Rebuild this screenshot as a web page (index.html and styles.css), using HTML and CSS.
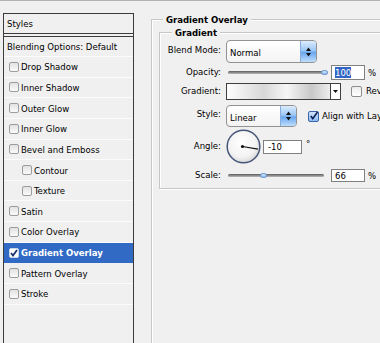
FILE: index.html
```html
<!DOCTYPE html>
<html lang="en">
<head>
  <meta charset="UTF-8">
  <title>Layer Style</title>
  <link rel="stylesheet" href="styles.css">
</head>
<body>

  <div class="dialog">

    <!-- lista de estilos -->
    <div class="styles-panel">
      <div class="panel-title">Styles</div>
      <div class="panel-blending">Blending Options: Default</div>
      <ul class="effects">
        <li><span class="box"></span>Drop Shadow</li>
        <li><span class="box"></span>Inner Shadow</li>
        <li><span class="box"></span>Outer Glow</li>
        <li><span class="box"></span>Inner Glow</li>
        <li><span class="box"></span>Bevel and Emboss</li>
        <li class="sub"><span class="box"></span>Contour</li>
        <li class="sub"><span class="box"></span>Texture</li>
        <li><span class="box"></span>Satin</li>
        <li><span class="box"></span>Color Overlay</li>
        <li class="selected">
          <span class="box checked">
            <svg width="8" height="8" viewBox="0 0 8 8"><path d="M1 4 L3 6.5 L7 1" fill="none" stroke="#1b2f6e" stroke-width="1.8"/></svg>
          </span>Gradient Overlay
        </li>
        <li><span class="box"></span>Pattern Overlay</li>
        <li><span class="box"></span>Stroke</li>
      </ul>
    </div>

    <!-- opciones -->
    <fieldset class="group outer">
      <legend>Gradient Overlay</legend>
      <fieldset class="group inner">
        <legend>Gradient</legend>

        <div class="row row-select">
          <label>Blend Mode:</label>
          <div class="select select-blend">
            <span class="select-value">Normal</span>
            <span class="select-arrows">
              <svg width="5" height="10" viewBox="0 0 5 10"><path d="M0 4 L2.5 0.5 L5 4 Z M0 6 L2.5 9.5 L5 6 Z" fill="#111"/></svg>
            </span>
          </div>
        </div>

        <div class="row row-slider">
          <label>Opacity:</label>
          <div class="slider"><div class="track"><span class="thumb" style="left: 100%"></span></div></div>
          <span class="field field-pct field-tall"><span class="sel">100</span></span>
          <span class="unit">%</span>
        </div>

        <div class="row row-gradient">
          <label>Gradient:</label>
          <div class="gradient-pick">
            <span class="gradient-swatch"></span>
            <span class="gradient-drop">
              <svg width="5" height="3" viewBox="0 0 5 3"><path d="M0 0 L5 0 L2.5 3 Z" fill="#111"/></svg>
            </span>
          </div>
          <span class="check check-reverse"></span>
          <span class="check-label">Reverse</span>
        </div>

        <div class="row row-select row-style">
          <label>Style:</label>
          <div class="select select-style">
            <span class="select-value">Linear</span>
            <span class="select-arrows">
              <svg width="5" height="10" viewBox="0 0 5 10"><path d="M0 4 L2.5 0.5 L5 4 Z M0 6 L2.5 9.5 L5 6 Z" fill="#111"/></svg>
            </span>
          </div>
          <span class="check check-align on">
            <svg width="10" height="10" viewBox="0 0 10 10"><path d="M2 5 L4.2 8 L9.5 0.5" fill="none" stroke="#0d1f55" stroke-width="1.8"/></svg>
          </span>
          <span class="check-label label-align">Align with Layer</span>
        </div>

        <div class="row row-angle">
          <label>Angle:</label>
          <svg class="dial" width="35" height="35" viewBox="0 0 35 35">
            <defs>
              <radialGradient id="dialFill" cx="45%" cy="40%" r="60%">
                <stop offset="0" stop-color="#ffffff"/>
                <stop offset="0.7" stop-color="#f3f3f3"/>
                <stop offset="1" stop-color="#d9d9d9"/>
              </radialGradient>
            </defs>
            <circle cx="17.5" cy="17.5" r="16.3" fill="url(#dialFill)" stroke="#47577a" stroke-width="1.5"/>
            <line x1="16.5" y1="17.5" x2="32" y2="20.2" stroke="#111" stroke-width="1.2"/>
            <circle cx="16.5" cy="17.5" r="1.6" fill="#111"/>
          </svg>
          <span class="field field-angle">-10</span>
          <span class="unit unit-deg">°</span>
        </div>

        <div class="row row-slider row-scale">
          <label>Scale:</label>
          <div class="slider"><div class="track"><span class="thumb" style="left: 37%"></span></div></div>
          <span class="field field-pct">66</span>
          <span class="unit">%</span>
        </div>

      </fieldset>
    </fieldset>

  </div>

</body>
</html>
```

FILE: styles.css
```css
body {
  margin: 0;
  height: 342px;
  overflow: hidden;
  background: #f0f0f0;
  border-top: 1px solid #b3b3b3;
  font-family: "DejaVu Sans Condensed", "DejaVu Sans", sans-serif;
  font-stretch: condensed;
  font-size: 9.5px;
  color: #000;
}
.dialog { display: flex; align-items: flex-start; }

/* lista de estilos */
.styles-panel {
  flex: none;
  width: 131px;
  height: 340px;
  margin: 12px 0 0 3px;
  border: 1px solid #3c3c3c;
  box-sizing: border-box;
}
.panel-title {
  height: 19px;
  line-height: 19px;
  padding-left: 3px;
  border-bottom: 1px solid #3c3c3c;
}
.panel-blending {
  margin-top: 2px;
  height: 19px;
  line-height: 19px;
  padding-left: 3px;
  border-top: 1px solid #3c3c3c;
  border-bottom: 1px solid #fbfbfb;
  white-space: nowrap;
}
.effects { list-style: none; margin: 0; padding: 0; }
.effects li {
  display: flex;
  align-items: center;
  gap: 2px;
  height: 19.65px;
  padding-left: 5px;
  border-bottom: 1px solid #fbfbfb;
  white-space: nowrap;
}
.effects li.sub { padding-left: 18px; }
.effects li.selected { background: #316ac5; color: #fff; font-weight: bold; border-bottom-color: #316ac5; }
.box {
  flex: none;
  width: 10px;
  height: 10px;
  box-sizing: border-box;
  border: 1px solid #9c9c9c;
  border-radius: 2px;
  background: linear-gradient(#e2e2e2, #fafafa);
}
.box.checked {
  display: flex;
  align-items: center;
  justify-content: center;
  background: #fff;
  border-color: #c9d6ea;
}

/* grupos */
.group {
  margin: 0;
  min-width: 0;
  border: 1px solid #c7c7c7;
  box-shadow: inset 1px 1px 0 #fff, 1px 1px 0 #fff;
}
.group legend {
  padding: 0 3px;
  line-height: 13px;
  font-weight: bold;
  background: #f0f0f0;
}
.outer {
  flex: none;
  width: 260px;
  min-height: 340px;
  margin: 12px 0 0 17px;
  padding: 0 0 0 7px;
  box-sizing: border-box;
}
.outer > legend { margin-left: 4px; }
.inner {
  width: 240px;
  padding: 1px 0 2px 0;
  box-sizing: border-box;
}
.inner > legend { margin-left: 12px; }

/* filas */
.row { display: flex; align-items: center; white-space: nowrap; }
.row > label {
  flex: none;
  width: 61px;
  margin-right: 5px;
  padding-bottom: 2px;
  text-align: right;
}
.row-select { height: 23px; }
.row-select > label { padding-bottom: 5px; }
.row-slider { height: 19px; }
.row-gradient { height: 19px; }
.row-style { height: 22px; margin-top: 4px; }
.row-angle { height: 35px; margin-top: 2px; }
.row-scale { height: 21px; margin-top: 1px; }

.select {
  flex: none;
  display: flex;
  height: 23px;
  box-sizing: border-box;
  border: 1px solid #929292;
  border-radius: 4px;
  background: linear-gradient(#fff, #f3f3f3);
  overflow: hidden;
}
.select-blend { width: 91px; }
.select-style { width: 71px; height: 22px; }
.select-value { flex: 1; padding: 2px 0 0 3px; line-height: 19px; }
.select-arrows {
  width: 15px;
  display: flex;
  align-items: center;
  justify-content: center;
  border-left: 1px solid #86addb;
  background: linear-gradient(#dcecfd, #9cc7f5 45%, #6aa6ef 55%, #bfdffc);
}

.slider { flex: none; width: 98px; }
.track {
  position: relative;
  margin-left: 2px;
  height: 3px;
  border-radius: 2px;
  background: linear-gradient(#5a5a5a, #bababa);
}
.thumb {
  position: absolute;
  top: -1px;
  width: 7px;
  height: 5px;
  margin-left: -3.5px;
  box-sizing: border-box;
  border: 1px solid #6a96cf;
  border-radius: 50%;
  background: linear-gradient(#e3f0fd, #8cbbee);
}

.field {
  flex: none;
  box-sizing: border-box;
  height: 13px;
  line-height: 11px;
  padding-left: 3px;
  border: 1px solid #808080;
  background: #fff;
}
.field-pct { width: 34px; margin-left: 7px; }
.field-tall { height: 15px; line-height: 13px; }
.field-angle { width: 39px; height: 14px; line-height: 12px; margin-left: 2px; padding-left: 4px; }
.sel { background: #3166c4; color: #fff; }
.unit { margin-left: 3px; }
.unit-deg { margin-left: 4px; padding-bottom: 6px; }

.gradient-pick {
  flex: none;
  display: flex;
  height: 17px;
  box-sizing: border-box;
  border: 1px solid #3f3f3f;
}
.gradient-swatch {
  width: 103px;
  background: linear-gradient(to right, #fdfdfd 0%, #d8d8d8 36%, #f6f6f6 58%, #c8c8c8 82%, #ededed 100%);
}
.gradient-drop {
  width: 9px;
  display: flex;
  align-items: center;
  justify-content: center;
  border-left: 1px solid #3f3f3f;
  background: #fff;
}

.check {
  flex: none;
  width: 11px;
  height: 11px;
  box-sizing: border-box;
  border: 1px solid #8d8d8d;
  border-radius: 2px;
  background: linear-gradient(#ececec, #fff);
}
.check.on {
  display: flex;
  align-items: center;
  justify-content: center;
  border-color: #3c62a7;
  background: linear-gradient(#d3e5fb, #8dbcf2);
}
.check-reverse { margin-left: 10px; }
.check-align { margin-left: 11px; }
.check-label { margin-left: 4px; padding-bottom: 2px; }
.label-align { margin-left: 3px; }

.dial { flex: none; }
```
